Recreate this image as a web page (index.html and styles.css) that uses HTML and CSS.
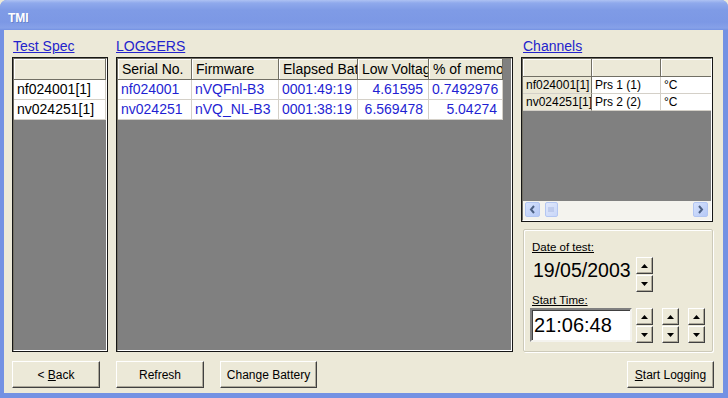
FILE: index.html
```html
<!DOCTYPE html>
<html lang="en">
<head>
    <meta charset="UTF-8">
    <title>TMI</title>
    <link rel="stylesheet" href="styles.css">
</head>
<body>
    <div class="window">
        <div class="titlebar"><span class="title">TMI</span></div>
        <div class="client">
            <div class="panes">
                <div class="col col-spec">
                    <a class="heading">Test Spec</a>
                    <div class="sunken grow">
                        <div class="well">
                            <div class="hrow"><div class="hcell full"></div></div>
                            <div class="row"><div class="cell full">nf024001[1]</div></div>
                            <div class="row"><div class="cell full">nv024251[1]</div></div>
                        </div>
                    </div>
                </div>

                <div class="col col-loggers">
                    <a class="heading flush">LOGGERS</a>
                    <div class="sunken grow">
                        <div class="well">
                            <div class="hrow">
                                <div class="hcell w-serial">Serial No.</div>
                                <div class="hcell w-firm">Firmware</div>
                                <div class="hcell w-elapsed">Elapsed Battery</div>
                                <div class="hcell w-volt">Low Voltage</div>
                                <div class="hcell w-mem">% of memory</div>
                            </div>
                            <div class="row blue">
                                <div class="cell w-serial">nf024001</div>
                                <div class="cell w-firm">nVQFnl-B3</div>
                                <div class="cell w-elapsed num">0001:49:19</div>
                                <div class="cell w-volt num">4.61595</div>
                                <div class="cell w-mem num">0.7492976</div>
                            </div>
                            <div class="row blue">
                                <div class="cell w-serial">nv024251</div>
                                <div class="cell w-firm">nVQ_NL-B3</div>
                                <div class="cell w-elapsed num">0001:38:19</div>
                                <div class="cell w-volt num">6.569478</div>
                                <div class="cell w-mem num">5.04274</div>
                            </div>
                        </div>
                    </div>
                </div>

                <div class="col col-right">
                    <a class="heading indent">Channels</a>
                    <div class="sunken channels">
                        <div class="well well-col">
                            <div class="ch-body">
                                <div class="hrow small">
                                    <div class="hcell c1"></div>
                                    <div class="hcell c2"></div>
                                    <div class="hcell c3"></div>
                                </div>
                                <div class="row small">
                                    <div class="fcell c1">nf024001[1]</div>
                                    <div class="cell c2">Prs 1 (1)</div>
                                    <div class="cell c3">°C</div>
                                </div>
                                <div class="row small">
                                    <div class="fcell c1">nv024251[1]</div>
                                    <div class="cell c2">Prs 2 (2)</div>
                                    <div class="cell c3">°C</div>
                                </div>
                            </div>
                            <div class="hscroll">
                                <div class="sbtn">
                                    <svg width="15" height="15" viewBox="0 0 15 15"><path d="M9 4 L6 7.5 L9 11" fill="none" stroke="#4d6185" stroke-width="2"/></svg>
                                </div>
                                <div class="thumb">
                                    <svg width="13" height="15" viewBox="0 0 13 15"><path d="M4 5v5M6 5v5M8 5v5" stroke="#a9b8e0" stroke-width="1"/></svg>
                                </div>
                                <div class="track"></div>
                                <div class="sbtn">
                                    <svg width="15" height="15" viewBox="0 0 15 15"><path d="M6 4 L9 7.5 L6 11" fill="none" stroke="#4d6185" stroke-width="2"/></svg>
                                </div>
                            </div>
                        </div>
                    </div>

                    <div class="groupbox">
                        <div class="label"><u>Date of test:</u></div>
                        <div class="date-row">
                            <div class="date">19/05/2003</div>
                            <div class="spin">
                                <div class="spin-btn"><svg width="7" height="4" viewBox="0 0 7 4"><polygon points="3.5,0 7,4 0,4" fill="#000"/></svg></div>
                                <div class="spin-btn"><svg width="7" height="4" viewBox="0 0 7 4"><polygon points="0,0 7,0 3.5,4" fill="#000"/></svg></div>
                            </div>
                        </div>
                        <div class="label"><u>Start Time:</u></div>
                        <div class="time-row">
                            <div class="time-box">21:06:48</div>
                            <div class="spin">
                                <div class="spin-btn"><svg width="7" height="4" viewBox="0 0 7 4"><polygon points="3.5,0 7,4 0,4" fill="#000"/></svg></div>
                                <div class="spin-btn"><svg width="7" height="4" viewBox="0 0 7 4"><polygon points="0,0 7,0 3.5,4" fill="#000"/></svg></div>
                            </div>
                            <div class="spin">
                                <div class="spin-btn"><svg width="7" height="4" viewBox="0 0 7 4"><polygon points="3.5,0 7,4 0,4" fill="#000"/></svg></div>
                                <div class="spin-btn"><svg width="7" height="4" viewBox="0 0 7 4"><polygon points="0,0 7,0 3.5,4" fill="#000"/></svg></div>
                            </div>
                            <div class="spin">
                                <div class="spin-btn"><svg width="7" height="4" viewBox="0 0 7 4"><polygon points="3.5,0 7,4 0,4" fill="#000"/></svg></div>
                                <div class="spin-btn"><svg width="7" height="4" viewBox="0 0 7 4"><polygon points="0,0 7,0 3.5,4" fill="#000"/></svg></div>
                            </div>
                        </div>
                    </div>
                </div>
            </div>

            <div class="buttons">
                <button class="btn w-back">&lt; <u>B</u>ack</button>
                <button class="btn w-back">Refresh</button>
                <button class="btn w-battery">Change Battery</button>
                <div class="spacer"></div>
                <button class="btn w-start"><u>S</u>tart Logging</button>
            </div>
        </div>
    </div>
</body>
</html>
```

FILE: styles.css
```css
* {
    box-sizing: border-box;
}
body {
    margin: 0;
    font-family: 'Liberation Sans', Arial, sans-serif;
    background: #ece9d8;
}
.window {
    width: 728px;
    height: 398px;
    display: flex;
    flex-direction: column;
    background: #7391e3;
    border-radius: 7px 7px 0 0;
    overflow: hidden;
}
.titlebar {
    height: 30px;
    flex: none;
    display: flex;
    align-items: center;
    padding: 5px 0 0 8px;
    background: linear-gradient(#aec2f3 0, #8fa9ec 3px, #7f9be6 10px, #7c98e5 22px, #86a1e8 28px, #7391e3 30px);
}
.title {
    color: #fff;
    font-weight: bold;
    font-size: 12px;
    text-shadow: 1px 1px 0 #6783cc;
}
.client {
    flex: 1;
    margin: 0 5px 5px 4px;
    background: #ece9d8;
    padding: 0 10px 5px 8px;
    display: flex;
    flex-direction: column;
}
.panes {
    display: flex;
    gap: 8px;
    height: 322px;
}
.col {
    display: flex;
    flex-direction: column;
}
.col-spec { width: 96px; }
.col-loggers { width: 397px; }
.col-right { width: 192px; }

.heading {
    display: block;
    height: 27px;
    padding: 8px 0 3px 1px;
    line-height: 16px;
    font-size: 14px;
    color: #2323cc;
    text-decoration: underline;
}
.heading.flush { padding-left: 0; }
.heading.indent { padding-left: 2px; }

.sunken {
    border: 1px solid #161616;
}
.grow {
    flex: 1;
}
.well {
    height: 100%;
    border: 1px solid;
    border-color: #716f64 #fff #fff #716f64;
    background: #808080;
    overflow: hidden;
}

/* grid rows */
.hrow, .row {
    display: flex;
    white-space: nowrap;
}
.hrow { height: 21px; }
.row { height: 20px; }
.hcell, .cell, .fcell {
    flex: none;
    overflow: hidden;
    font-size: 14px;
    line-height: 19px;
}
.hcell {
    background: #ece9d8;
    border-right: 1px solid #716f64;
    border-bottom: 1px solid #716f64;
    box-shadow: inset 1px 1px #fff;
    padding-left: 4px;
    line-height: 20px;
    color: #000;
}
.cell {
    background: #fff;
    border-right: 1px solid #d4d0c8;
    border-bottom: 1px solid #d4d0c8;
    padding: 0 3px;
    color: #000;
}
.full { width: 92px; }
.row.blue .cell { color: #1f1fd2; }
.num { text-align: right; padding-right: 5px; }
.w-serial { width: 74px; }
.w-firm { width: 87px; }
.w-elapsed { width: 79px; }
.w-volt { width: 71px; }
.w-mem { width: 74px; }

/* channels */
.channels {
    height: 165px;
}
.well-col {
    display: flex;
    flex-direction: column;
}
.ch-body {
    flex: 1;
    overflow: hidden;
}
.hrow.small { height: 18px; }
.row.small { height: 17px; }
.small .hcell, .small .cell, .small .fcell {
    font-size: 12px;
    line-height: 16px;
}
.fcell {
    background: #ece9d8;
    border-right: 1px solid #716f64;
    border-bottom: 1px solid #d4d0c8;
    padding-left: 3px;
    color: #000;
}
.c1 { width: 69px; }
.c2 { width: 69px; }
.c3 { width: 60px; }
.hscroll {
    height: 19px;
    flex: none;
    display: flex;
    align-items: flex-start;
    gap: 1px;
    padding: 1px 3px 0 2px;
    background: #f4f3ee;
    border-bottom: 2px solid #f4f3ee;
}
.sbtn, .thumb {
    width: 15px;
    height: 15px;
    flex: none;
    border-radius: 2px;
    background: linear-gradient(135deg, #d6e2fd, #b6c9f6);
    border: 1px solid #b3c6f2;
    display: flex;
    align-items: center;
    justify-content: center;
}
.sbtn svg, .thumb svg {
    flex: none;
}
.thumb {
    width: 13px;
    margin-left: 4px;
    background: linear-gradient(135deg, #e0e8fc, #c8d6f8);
}
.track {
    flex: 1;
}

/* date / time group */
.groupbox {
    margin: 7px 0 0 2px;
    height: 123px;
    border: 1px solid #cdcab9;
    box-shadow: inset 1px 1px #fff, 1px 1px #fff;
    border-radius: 2px;
    padding: 10px 0 0 6px;
}
.label {
    font-size: 11.5px;
    line-height: 14px;
    padding-left: 2px;
    color: #000;
}
.date-row {
    display: flex;
    margin: 3px 0 1px;
}
.date {
    width: 102px;
    margin-right: 4px;
    padding-left: 3px;
    font-size: 19.5px;
    line-height: 26px;
    color: #000;
}
.time-row {
    display: flex;
    gap: 9px;
    margin-top: 1px;
}
.time-box {
    width: 102px;
    height: 34px;
    margin-right: -5px;
    background: #fff;
    border: 2px solid;
    border-color: #808080 #f4f3ee #f4f3ee #808080;
    box-shadow: inset 1px 1px #404040;
    padding-left: 2px;
    font-size: 20px;
    line-height: 30px;
    color: #000;
}
.spin {
    display: flex;
    flex-direction: column;
    gap: 1px;
}
.spin-btn {
    width: 17px;
    height: 17px;
    background: #ece9d8;
    border: 1px solid;
    border-color: #fff #404040 #404040 #fff;
    box-shadow: inset -1px -1px #aca899;
    display: flex;
    align-items: center;
    justify-content: center;
}

/* bottom buttons */
.buttons {
    display: flex;
    gap: 16px;
    margin-top: 9px;
    height: 27px;
}
.spacer {
    flex: 1;
}
.btn {
    height: 27px;
    background: #ece9d8;
    border: 1px solid;
    border-color: #fff #404040 #404040 #fff;
    box-shadow: inset -1px -1px #aca899;
    font-family: 'Liberation Sans', Arial, sans-serif;
    font-size: 12px;
    color: #000;
    padding: 0;
}
.w-back { width: 88px; }
.w-battery { width: 97px; }
.w-start { width: 87px; margin-right: -1px; }
```
